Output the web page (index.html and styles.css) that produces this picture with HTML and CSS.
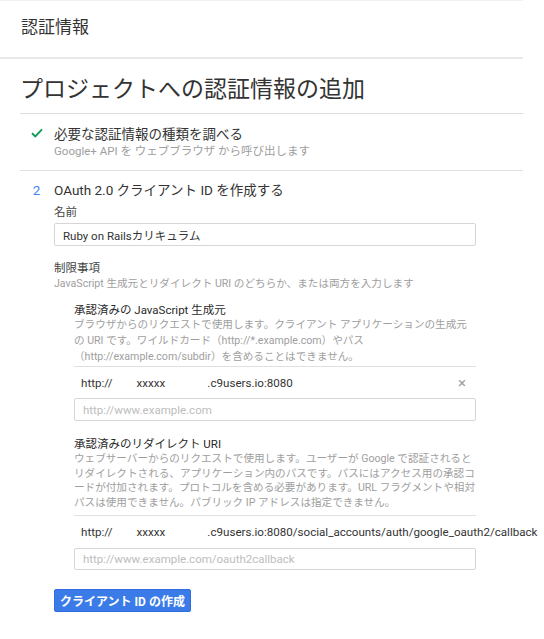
FILE: index.html
```html
<!DOCTYPE html>
<html lang="ja">
<head>
    <meta charset="UTF-8">
    <title>認証情報</title>
    <link rel="stylesheet" href="styles.css">
</head>
<body>
    <div class="page">
        <div class="page-header">認証情報</div>
        <div class="content">
            <h1 class="title">プロジェクトへの認証情報の追加</h1>

            <div class="step done">
                <span class="step-mark">
                    <svg width="12" height="10" viewBox="0 0 12 10"><path d="M1 5.2L4.3 8.4L11 1.4" fill="none" stroke="#0f9d58" stroke-width="2"/></svg>
                </span>
                <div class="step-body">
                    <div class="step-title">必要な認証情報の種類を調べる</div>
                    <div class="step-sub">Google+ API を ウェブブラウザ から呼び出します</div>
                </div>
            </div>

            <div class="step active">
                <span class="step-mark num">2</span>
                <div class="step-body">
                    <div class="step-title">OAuth 2.0 クライアント ID を作成する</div>

                    <label class="label name-label">名前</label>
                    <input class="text-input" type="text" value="Ruby on Railsカリキュラム">

                    <div class="label limit-label">制限事項</div>
                    <div class="hint">JavaScript 生成元とリダイレクト URI のどちらか、または両方を入力します</div>

                    <div class="restriction origins">
                        <div class="sub-label">承認済みの JavaScript 生成元</div>
                        <div class="hint desc">ブラウザからのリクエストで使用します。クライアント アプリケーションの生成元<br>の URI です。ワイルドカード（http://*.example.com）やパス<br>（http://example.com/subdir）を含めることはできません。</div>
                        <div class="uri-row">
                            <span class="uri">http://<span class="gap1">xxxxx</span><span class="gap2">.c9users.io:8080</span></span>
                            <span class="remove">×</span>
                        </div>
                        <input class="text-input" type="text" placeholder="http://www.example.com">
                    </div>

                    <div class="restriction redirects">
                        <div class="sub-label">承認済みのリダイレクト URI</div>
                        <div class="hint desc">ウェブサーバーからのリクエストで使用します。ユーザーが Google で認証されると<br>リダイレクトされる、アプリケーション内のパスです。パスにはアクセス用の承認コ<br>ードが付加されます。プロトコルを含める必要があります。URL フラグメントや相対<br>パスは使用できません。パブリック IP アドレスは指定できません。</div>
                        <div class="uri-row">
                            <span class="uri">http://<span class="gap1">xxxxx</span><span class="gap2">.c9users.io:8080/social_accounts/auth/google_oauth2/callback</span></span>
                        </div>
                        <input class="text-input" type="text" placeholder="http://www.example.com/oauth2callback">
                    </div>

                    <button class="btn-primary" type="button">クライアント ID の作成</button>
                </div>
            </div>
        </div>
    </div>
</body>
</html>
```

FILE: styles.css
```css
:root {
    --text: #333333;
    --muted: #9e9e9e;
    --line: #e0e0e0;
    --blue: #4285f4;
}
body {
    margin: 0;
    font-family: Roboto, "Noto Sans CJK JP", sans-serif;
    color: var(--text);
    background: #fff;
    overflow: hidden;
}
.page {
    width: 523px;
    border-top: 1px solid #f2f2f2;
}
.page-header {
    font-size: 17px;
    line-height: 20px;
    padding: 16px 21px 20px;
    border-bottom: 2px solid #e8e8e8;
}
.content {
    padding-left: 20px;
}
.title {
    margin: 0;
    font-size: 23px;
    font-weight: 400;
    line-height: 28px;
    padding: 17px 0 9px;
    border-bottom: 1px solid #dcdcdc;
}
.step {
    display: flex;
}
.step.done {
    padding: 11px 0;
    border-bottom: 1px solid var(--line);
}
.step.active {
    padding-top: 10px;
}
.step-mark {
    width: 34px;
    flex: none;
    display: flex;
    justify-content: center;
    padding: 3px 1px 0 0;
    box-sizing: border-box;
}
.step-mark.num {
    color: var(--blue);
    font-size: 13.5px;
    line-height: 18px;
    padding-top: 0;
}
.step-body {
    width: 422px;
}
.step-title {
    font-size: 13.5px;
    line-height: 18px;
}
.step-sub {
    font-size: 11.5px;
    line-height: 16px;
    color: var(--muted);
}
.label {
    display: block;
    font-size: 11.5px;
    line-height: 16px;
    color: #444;
}
.name-label {
    margin: 5px 0 3px;
}
.limit-label {
    margin-top: 14px;
}
.hint {
    font-size: 10.6px;
    line-height: 16px;
    color: var(--muted);
    white-space: nowrap;
}
.text-input {
    display: block;
    box-sizing: border-box;
    width: 100%;
    height: 23px;
    border: 1px solid #d6d6d6;
    border-radius: 2px;
    padding: 0 8px;
    font-family: inherit;
    font-size: 11.5px;
    color: var(--text);
    outline: none;
}
.text-input::placeholder {
    color: #bdbdbd;
}
.restriction {
    margin-left: 20px;
    width: 402px;
}
.sub-label {
    font-size: 11.5px;
    line-height: 14px;
    color: #2a2a2a;
}
.origins {
    margin-top: 11px;
}
.origins .desc {
    line-height: 15.8px;
    margin-bottom: 2px;
}
.redirects {
    margin-top: 16px;
}
.redirects .sub-label {
    margin-bottom: 1px;
}
.redirects .desc {
    line-height: 14.5px;
    margin-bottom: 5px;
}
.uri-row {
    display: flex;
    justify-content: space-between;
    align-items: center;
    height: 31px;
    border-top: 1px solid var(--line);
    padding: 0 10px 0 7px;
    white-space: nowrap;
    font-size: 11.6px;
    color: var(--text);
}
.redirects .uri-row {
    height: 32px;
}
.redirects .text-input {
    height: 22px;
}
.gap1 {
    margin-left: 24px;
}
.gap2 {
    margin-left: 42px;
}
.remove {
    color: #a0a0a0;
    font-size: 15px;
}
.btn-primary {
    margin-top: 19px;
    height: 23px;
    width: 137px;
    padding: 0;
    background: #3b7be8;
    color: #fff;
    border: 1px solid #2f6de0;
    border-radius: 2px;
    font-family: inherit;
    font-size: 12px;
    font-weight: 700;
}
```
